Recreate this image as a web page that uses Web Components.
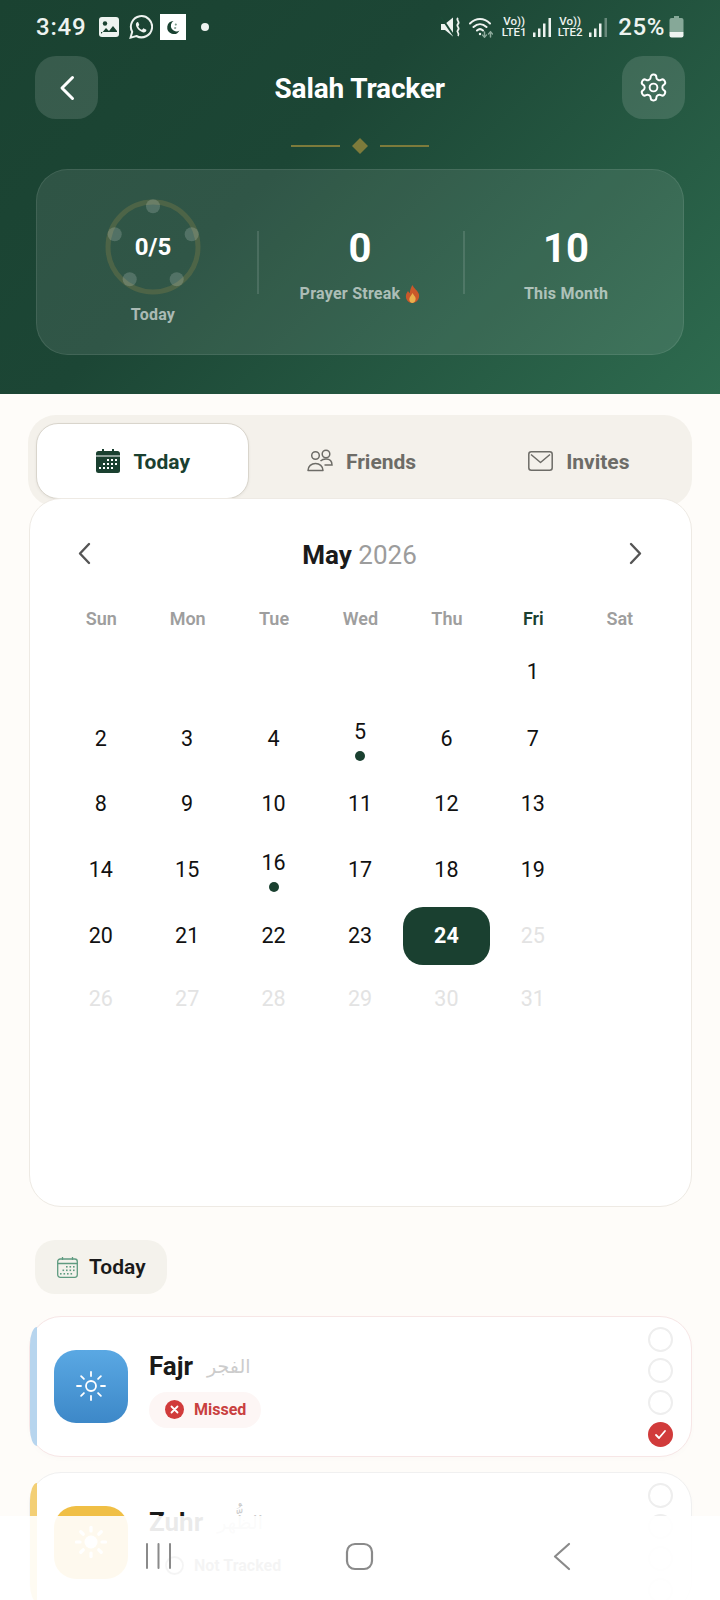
<!DOCTYPE html>
<html lang="en">
<head>
<meta charset="utf-8">
<title>Salah Tracker</title>
<style>
html,body{margin:0;padding:0;background:#fefcf9}
body{font-family:Roboto,"Noto Sans",sans-serif;width:720px;height:1600px;overflow:hidden}
</style>
</head>
<body>
<salah-app>
  <hero-panel>
    <status-bar></status-bar>
    <top-bar title="Salah Tracker"></top-bar>
    <orn-divider></orn-divider>
    <stats-card></stats-card>
  </hero-panel>
  <tab-switch></tab-switch>
  <calendar-card></calendar-card>
  <day-chip>Today</day-chip>
  <prayer-card name="Fajr" arabic="الفجر" tone="blue" status="missed" label="Missed" checked="3"></prayer-card>
  <prayer-card name="Zuhr" arabic="الظُّهر" tone="yellow" status="none" label="Not Tracked" checked="-1"></prayer-card>
  <nav-bar></nav-bar>
</salah-app>
<script>
function def(name,html,init){
  customElements.define(name,class extends HTMLElement{
    connectedCallback(){
      if(this.shadowRoot)return;
      const r=this.attachShadow({mode:'open'});
      r.innerHTML=typeof html==='function'?html(this):html;
      if(init)init(r,this);
    }
  });
}
def('salah-app',`<style>:host{display:block;position:relative;width:720px;height:1600px;overflow:hidden;background:#fefcf9;font-family:Roboto,"Noto Sans",sans-serif;color:#1a1a1a}</style><slot></slot>`);
def('hero-panel',`<style>:host{display:block;height:394px;box-sizing:border-box;background:linear-gradient(135deg,#1a4231 0%,#1c4635 40%,#2e6b4f 100%)}</style><slot></slot>`);
const bars=(dim)=>`<svg viewBox="0 0 18 19" width="18" height="19" fill="#eef3f0"><rect x="0" y="14.500" width="2.500" height="4.500"/><rect x="5" y="10.500" width="2.500" height="8.500"/><rect x="10" y="5.500" width="2.500" height="13.500"/><rect x="15.500" y="0" width="2.500" height="19" opacity="${dim?.35:1}"/></svg>`;
def('status-bar',`<style>
:host{display:flex;align-items:center;height:54px;box-sizing:border-box;padding:0 36px 0 36px;color:#eef3f0;font-weight:500}
.t{font-size:24px;letter-spacing:.8px;width:63px;line-height:54px}
svg{display:block;flex:none}
.sp{flex:1}
.lte{display:flex;flex-direction:column;align-items:center;font-size:11.500px;line-height:11px;width:26px;font-weight:500;margin-top:-1px}
.lte b{font-weight:500;font-size:11.500px;letter-spacing:0}
.pct{font-size:24px;letter-spacing:.6px;margin-left:11px}
</style>
<span class="t">3:49</span>
<svg width="20" height="20" viewBox="0 0 20 20"><rect width="20" height="20" rx="3" fill="#eef3f0"/><circle cx="6" cy="6.500" r="2.200" fill="#1a4231"/><path d="M2 17l5-6 3 3 4-5 4 5v1H2z" fill="#1a4231"/></svg>
<svg style="margin-left:10px" width="24" height="24" viewBox="0 0 24 24" fill="none"><path d="M1.600 22.600l1.600-5.800A10.600 10.600 0 1 1 7.400 21z" stroke="#eef3f0" stroke-width="2"/><path d="M8.600 6.900c-.6 0-1.700.9-1.700 2.700 0 3 3.900 7.400 7.600 7.800 1.700.1 2.900-1 2.900-2.200 0-.4-.1-.7-.4-.8l-2.200-1c-.4-.1-.6 0-.8.3l-.7.9c-.2.2-.4.2-.7.1-1.400-.6-2.500-1.600-3.200-3-.1-.3-.1-.5.1-.7l.6-.7c.2-.2.2-.5.1-.7l-.9-2.200c-.1-.3-.3-.4-.7-.4z" fill="#eef3f0"/></svg>
<svg style="margin-left:7px" width="26" height="26" viewBox="0 0 26 26"><rect width="26" height="26" fill="#fff"/><path d="M13.500 7a6.500 6.500 0 1 0 6 9.500 5.500 5.500 0 0 1-6-9.500z" fill="#1a4231"/><path d="M15.500 9.500c1.300-.2 1.800 1 1 1.700-1 .7-2 .1-1.700-.8.100-.4.300-.7.700-.9zM15 13c1.200 0 1.700.9 1 1.600-.8.700-2 .2-1.800-.7 0-.4.300-.7.800-.9z" fill="#7c9a8b"/></svg>
<svg style="margin-left:15px" width="8" height="8"><circle cx="4" cy="4" r="4" fill="#eef3f0"/></svg>
<span class="sp"></span>
<svg width="20" height="20" viewBox="0 0 20 20"><path d="M0 7h4L12 .5v19L4 13H0z" fill="#eef3f0"/><path d="M0 0l13 19" stroke="#1c4a37" stroke-width="2"/><path d="M17 1c-2.500 2.500 2.500 3.500 0 6s2.500 3.500 0 6 2.500 3 0 6" stroke="#eef3f0" stroke-width="1.800" fill="none"/></svg>
<svg style="margin-left:8px" width="24" height="21" viewBox="0 0 24 21" fill="none" stroke="#eef3f0" stroke-width="2" stroke-linecap="round"><path d="M1 6.500C7 .5 15 .5 21 6.500M4.500 10c4-3.800 9-3.800 13 0M8 13.500c2-1.800 4-1.800 6 0"/><circle cx="11" cy="17" r="1.200" fill="#eef3f0" stroke="none"/><path d="M15.500 15v5M21.500 20v-5" stroke="#8eaa9c" stroke-width="1.500"/><path d="M13.500 18l2 2.200 2-2.200M19.500 17l2-2.200 2 2.200" stroke="#8eaa9c" stroke-width="1.300"/></svg>
<span class="lte" style="margin-left:8px"><b>Vo))</b><span>LTE1</span></span>
<span style="margin-left:6px">${bars(false)}</span>
<span class="lte" style="margin-left:6px"><b>Vo))</b><span>LTE2</span></span>
<span style="margin-left:6px">${bars(true)}</span>
<span class="pct">25%</span>
<svg style="margin-left:4px" width="15" height="22" viewBox="0 0 15 22"><path d="M5 0h5v2H5z" fill="#86a898"/><path d="M2.500 2h10A2 2 0 0 1 14.500 4v12H.5V4a2 2 0 0 1 2-2z" fill="#86a898"/><path d="M.5 16h14v3.500a2 2 0 0 1-2 2h-10a2 2 0 0 1-2-2z" fill="#eef3f0"/></svg>`);
def('top-bar',t=>`<style>
:host{display:flex;align-items:center;justify-content:space-between;height:63px;margin-top:2px;padding:0 35.500px 0 35px;color:#fff}
.b{width:63px;height:63px;border-radius:21px;background:rgba(255,255,255,.13);display:flex;align-items:center;justify-content:center}
h1{margin:2px 0 0;font-size:28px;font-weight:700;line-height:61px;letter-spacing:-.15px}
svg{display:block}
</style>
<div class="b"><svg width="16" height="26" viewBox="0 0 16 26" fill="none" stroke="#fff" stroke-width="3" stroke-linecap="round" stroke-linejoin="round"><path d="M13.500 2.500L3 13l10.500 10.500"/></svg></div>
<h1>${t.getAttribute('title')}</h1>
<div class="b"><svg width="31" height="31" viewBox="0 0 24 24" fill="none" stroke="#fff" stroke-width="1.500" stroke-linecap="round" stroke-linejoin="round"><path d="M12.220 2h-.44a2 2 0 0 0-2 2v.18a2 2 0 0 1-1 1.730l-.43.250a2 2 0 0 1-2 0l-.15-.080a2 2 0 0 0-2.730.730l-.22.380a2 2 0 0 0 .730 2.730l.15.100a2 2 0 0 1 1 1.720v.510a2 2 0 0 1-1 1.740l-.15.090a2 2 0 0 0-.730 2.730l.22.380a2 2 0 0 0 2.730.730l.15-.080a2 2 0 0 1 2 0l.43.250a2 2 0 0 1 1 1.730V20a2 2 0 0 0 2 2h.44a2 2 0 0 0 2-2v-.18a2 2 0 0 1 1-1.730l.43-.250a2 2 0 0 1 2 0l.15.080a2 2 0 0 0 2.730-.730l.22-.390a2 2 0 0 0-.730-2.730l-.15-.080a2 2 0 0 1-1-1.740v-.5a2 2 0 0 1 1-1.740l.15-.090a2 2 0 0 0 .730-2.730l-.22-.380a2 2 0 0 0-2.730-.730l-.15.080a2 2 0 0 1-2 0l-.43-.250a2 2 0 0 1-1-1.730V4a2 2 0 0 0-2-2z"/><circle cx="12" cy="12" r="3"/></svg></div>`);
def('orn-divider',`<style>
:host{display:flex;align-items:center;justify-content:center;height:16px;margin-top:19px;gap:12px}
i{display:block;width:49px;height:1.500px;background:#7d7b3b}
svg{display:block}
</style><i></i><svg width="16" height="16"><path d="M8 0l8 8-8 8-8-8z" fill="#7d7b3b"/></svg><i></i>`);
def('stats-card',`<style>
:host{display:grid;grid-template-columns:220px 206px 1fr;height:186px;box-sizing:border-box;margin:15px 36px 0;border-radius:32px;background:rgba(255,255,255,.09);border:1px solid rgba(255,255,255,.09);color:#fff}
.c{display:flex;flex-direction:column;align-items:center;position:relative}
.c.f{padding-left:12px}
.c.l{padding-right:14px}
.c+.c::before{content:"";position:absolute;left:0;top:61px;width:1.500px;height:63px;background:rgba(255,255,255,.12)}
.ring{position:relative;width:96px;height:96px;margin-top:29px;flex:none}
.ring svg{display:block}
.ring span{position:absolute;inset:0;display:flex;align-items:center;justify-content:center;font-size:24px;font-weight:700}
.lb{font-size:16px;font-weight:700;color:rgba(255,255,255,.6);line-height:20px;letter-spacing:.25px}
.n{font-size:40px;font-weight:700;line-height:48px;margin-top:55px}
.c.f .lb{margin-top:10px}
.c+.c .lb{margin-top:11px;display:flex;align-items:center;gap:5px}
</style>
<div class="c f"><div class="ring"><svg width="96" height="96" viewBox="0 0 96 96"><circle cx="48" cy="48" r="45" fill="none" stroke="#616e47" stroke-opacity=".6" stroke-width="5"/><g fill="rgba(255,255,255,.17)"><circle cx="48" cy="7.300" r="7"/><circle cx="86.700" cy="35.300" r="7"/><circle cx="71.700" cy="80.300" r="7"/><circle cx="24.700" cy="80.300" r="7"/><circle cx="9.700" cy="35.300" r="7"/></g></svg><span>0/5</span></div><div class="lb">Today</div></div>
<div class="c"><div class="n">0</div><div class="lb">Prayer Streak <svg width="15" height="18" viewBox="0 0 15 18"><path d="M7.500 0c.8 3 5.500 5.500 6.500 9.500C14.800 14 11.500 18 7.500 18S.2 14.500 1 10c.3-1.800 1.500-3 2-4 .7 1 1 1.800 1.800 2.200C5 5 6 2 7.500 0z" fill="#c9582a"/><path d="M7.500 8c.6 1.800 3.200 3.300 3.200 5.800 0 2.200-1.500 4.200-3.200 4.200s-3.200-1.700-3.200-3.800C4.300 12 6.500 10.500 7.500 8z" fill="#e9b04c"/></svg></div></div>
<div class="c l"><div class="n">10</div><div class="lb">This Month</div></div>`);
def('tab-switch',`<style>
:host{display:grid;grid-template-columns:repeat(3,1fr);gap:4px;box-sizing:border-box;height:92px;margin:21px 28px -9px;padding:8px;border-radius:28px;background:#f4f1eb}
.t{display:flex;align-items:center;justify-content:center;gap:13px;height:76px;box-sizing:border-box;border-radius:22px;font-size:21px;font-weight:700;color:#6d6c67;padding-top:2px}
.t:not(.a){padding-left:3px}
.a{background:#fff;color:#1a4030;border:1px solid #d9d5cc;box-shadow:0 1px 3px rgba(0,0,0,.06);padding-left:1px}
svg{display:block;margin-top:-2px}
</style>
<div class="t a"><svg width="24" height="24" viewBox="0 0 24 24"><path d="M6 0h2v3H6zM16 0h2v3h-2z" fill="#1a4030"/><rect y="2" width="24" height="22" rx="2.500" fill="#1a4030"/><rect y="6.500" width="24" height="1" fill="#fff"/><g fill="#fff"><rect x="11" y="10" width="2" height="2"/><rect x="15" y="10" width="2" height="2"/><rect x="19" y="10" width="2" height="2"/><rect x="7" y="14" width="2" height="2"/><rect x="11" y="14" width="2" height="2"/><rect x="15" y="14" width="2" height="2"/><rect x="19" y="14" width="2" height="2"/><rect x="3" y="18" width="2" height="2"/><rect x="7" y="18" width="2" height="2"/><rect x="11" y="18" width="2" height="2"/><rect x="15" y="18" width="2" height="2"/></g></svg>Today</div>
<div class="t"><svg width="26" height="24" viewBox="0 0 26 24" fill="none" stroke="#6d6c67" stroke-width="1.500"><circle cx="8.500" cy="6.500" r="3.800"/><circle cx="19" cy="5" r="3.800"/><path d="M1 21.500c0-4.500 3.500-7 7.500-7s7.500 2.500 7.500 7z" stroke-linejoin="round"/><path d="M13.500 12c1.500-1.400 3.500-2 5.500-2 3.500 0 6 2 6 6h-7.500"/></svg>Friends</div>
<div class="t"><svg width="25" height="20" viewBox="0 0 25 20" fill="none" stroke="#6d6c67" stroke-width="1.500" stroke-linejoin="round"><rect x=".8" y=".8" width="23.400" height="18.400" rx="2.500"/><path d="M3 3.500l9.500 8 9.500-8"/></svg>Invites</div>`);
def('calendar-card',()=>{
  const rows=[[0,0,0,0,0,1,0],[2,3,4,5,6,7,0],[8,9,10,11,12,13,0],[14,15,16,17,18,19,0],[20,21,22,23,24,25,0],[26,27,28,29,30,31,0]];
  const cells=rows.flat().map(d=>{
    if(!d)return '<span class="d"></span>';
    let c='d';
    if(d===24)c+=' sel';
    if(d>24)c+=' off';
    if(d===5||d===16)c+=' dot';
    return `<span class="${c}"><span>${d}</span>${(d===5||d===16)?'<i></i>':''}</span>`;
  }).join('');
  const names=['Sun','Mon','Tue','Wed','Thu','Fri','Sat'];
  return `<style>
:host{display:block;position:relative;box-sizing:border-box;height:709px;margin:0 28.500px;background:#fff;border:1px solid #eeeae4;border-radius:32px;padding:0 28px}
.m{display:flex;align-items:center;justify-content:space-between;height:50px;margin:31px 20px 0 19px}
.m b{font-size:26px;font-weight:700;color:#1a1a1a}
.m b span{font-weight:400;color:#9c9c9c}
.m svg{margin-bottom:3px}
svg{display:block}
.h{display:grid;grid-template-columns:repeat(7,1fr);margin:24px -.5px 0 .5px;height:28px;align-items:center;text-align:center;font-size:18px;font-weight:600;color:#9e9e9e}
.h .fri{color:#1a4030}
.g{display:grid;grid-template-columns:repeat(7,1fr);grid-template-rows:68px 65px 65px 68px 64px 61px;margin-top:6px}
.d{display:flex;flex-direction:column;align-items:center;justify-content:center;font-size:21.500px;font-weight:450;color:#111;text-align:center;line-height:26px}
.d.dot span{margin-top:-4px}
.d i{display:block;width:10px;height:10px;border-radius:50%;background:#1a4030;margin-top:6px;margin-bottom:-6px}
.sel{background:#1a4030;color:#fff;font-weight:700;height:58px;align-self:center;border-radius:20px}
.off{color:#e3e3e3}
</style>
<div class="m"><svg width="14" height="23" viewBox="0 0 14 23" fill="none" stroke="#555" stroke-width="2.400" stroke-linecap="round" stroke-linejoin="round"><path d="M12 2L3 11.500 12 21"/></svg><b>May <span>2026</span></b><svg width="14" height="23" viewBox="0 0 14 23" fill="none" stroke="#555" stroke-width="2.400" stroke-linecap="round" stroke-linejoin="round"><path d="M2 2l9 9.500L2 21"/></svg></div>
<div class="h">${names.map(n=>`<span class="${n==='Fri'?'fri':''}">${n}</span>`).join('')}</div>
<div class="g">${cells}</div>`;
});
def('day-chip',`<style>
:host{display:flex;align-items:center;gap:11px;width:max-content;box-sizing:border-box;height:54px;margin:33px 0 22px 35px;padding:0 21px 0 22px;border-radius:20px;background:#f4f2ec;font-size:21px;font-weight:600;color:#1a1a1a}
svg{display:block}
</style><svg width="21" height="21" viewBox="0 0 21 21" fill="none" stroke="#5f9b80" stroke-width="1.300"><rect x=".7" y="2" width="19.600" height="18.300" rx="2.500"/><path d="M.7 6.500h19.600M5.500 0v3M15.500 0v3"/><g fill="#5f9b80" stroke="none"><rect x="9" y="9" width="1.600" height="1.600"/><rect x="12.500" y="9" width="1.600" height="1.600"/><rect x="16" y="9" width="1.600" height="1.600"/><rect x="5.500" y="12.500" width="1.600" height="1.600"/><rect x="9" y="12.500" width="1.600" height="1.600"/><rect x="12.500" y="12.500" width="1.600" height="1.600"/><rect x="16" y="12.500" width="1.600" height="1.600"/><rect x="3" y="16" width="1.600" height="1.600"/><rect x="6.500" y="16" width="1.600" height="1.600"/><rect x="10" y="16" width="1.600" height="1.600"/><rect x="13.500" y="16" width="1.600" height="1.600"/></g></svg><slot></slot>`);
def('prayer-card',t=>{
  const blue=t.getAttribute('tone')==='blue';
  const missed=t.getAttribute('status')==='missed';
  const ck=+t.getAttribute('checked');
  const circ=[0,1,2,3].map(i=>i===ck
    ?`<span class="o red"><svg width="13" height="11" viewBox="0 0 13 11" fill="none" stroke="#fff" stroke-width="1.800" stroke-linecap="round" stroke-linejoin="round"><path d="M2 6l3 3 6-7"/></svg></span>`
    :`<span class="o"></span>`).join('');
  const rays=[0,45,90,135,180,225,270,315].map(a=>`<path d="M0 -14V-10" transform="rotate(${a})"/>`).join('');
  const sun=blue
    ?`<svg width="30" height="30" viewBox="-15 -15 30 30" fill="none" stroke="#fff" stroke-width="1.800" stroke-linecap="round"><circle r="5"/>${rays}</svg>`
    :`<svg width="32" height="32" viewBox="-16 -16 32 32" fill="#fff" stroke="#fff" stroke-width="3.200" stroke-linecap="round"><circle r="6.500" stroke="none"/>${rays.replace(/-14V-10/g,'-14.500V-11')}</svg>`;
  const badge=missed
    ?`<svg width="19" height="19" viewBox="0 0 19 19"><circle cx="9.500" cy="9.500" r="9.500" fill="#d13b3b"/><path d="M6.500 6.500l6 6M12.500 6.500l-6 6" stroke="#fff" stroke-width="1.800" stroke-linecap="round"/></svg>`
    :`<svg width="19" height="19" viewBox="0 0 19 19" fill="none"><circle cx="9.500" cy="9.500" r="8.500" stroke="#8a8a8a" stroke-width="1.800"/></svg>`;
  return `<style>
:host{display:flex;box-sizing:border-box;height:141px;margin:0 28.500px 15px;background:#fff;border:1.500px solid ${blue?'#f7e6e6':'#f0f0f0'};border-radius:32px;box-shadow:0 2px 6px rgba(0,0,0,.015)}
.bar{flex:none;width:7px;margin:10px 0;background:${blue?'#b7d5ee':'#f3cf75'};border-radius:8px 0 0 8px/20px 0 0 20px}
.ic{flex:none;width:74px;height:73px;margin:32.500px 0 0 17.500px;border-radius:22px;background:${blue?'linear-gradient(#5aa8e3,#3d88c8)':'#f0bf45'};display:flex;align-items:center;justify-content:center}
.tx{margin:33.500px 0 0 21px}
.nm{display:flex;align-items:center;gap:14px;height:30px}
.nm b{font-size:26px;font-weight:700;color:#1a1a1a}
.nm span{font-size:19px;color:#cccccc;font-family:"Noto Sans","DejaVu Sans",sans-serif}
.bd{display:inline-flex;align-items:center;gap:10px;height:36px;margin-top:11px;padding:0 15px 0 16px;border-radius:18px;background:${missed?'#fdf6f5':'#f7f7f7'};font-size:16px;font-weight:700;color:${missed?'#c9403f':'#8a8a8a'}}
.cs{margin-left:auto;margin-right:18px;padding-top:9.500px;display:flex;flex-direction:column;gap:6.700px}
.o{display:flex;align-items:center;justify-content:center;box-sizing:border-box;width:25px;height:25px;border-radius:50%;border:2.500px solid #eeeeee}
.red{background:#d13b3b;border:none}
svg{display:block}
</style>
<div class="bar"></div><div class="ic">${sun}</div>
<div class="tx"><div class="nm"><b>${t.getAttribute('name')}</b><span dir="rtl">${t.getAttribute('arabic')}</span></div><div class="bd">${badge}${t.getAttribute('label')}</div></div>
<div class="cs">${circ}</div>`;
});
def('nav-bar',`<style>
:host{position:absolute;left:0;right:0;bottom:0;height:84px;background:rgba(255,255,255,.91);display:block}
svg{position:absolute;top:26px;display:block}
</style>
<svg style="left:145px" width="27" height="28" viewBox="0 0 27 28" stroke="#8a8a8a" stroke-width="2" stroke-linecap="round"><path d="M2 2v24M13.500 2v24M25 2v24"/></svg>
<svg style="left:345px" width="29" height="29" viewBox="0 0 29 29" fill="none" stroke="#8a8a8a" stroke-width="2.200"><rect x="2" y="2" width="25" height="25" rx="8"/></svg>
<svg style="left:552px" width="19" height="29" viewBox="0 0 19 29" fill="none" stroke="#8a8a8a" stroke-width="2.200" stroke-linecap="round" stroke-linejoin="round"><path d="M17 2L3 14.500 17 27"/></svg>`);
</script>
</body>
</html>
